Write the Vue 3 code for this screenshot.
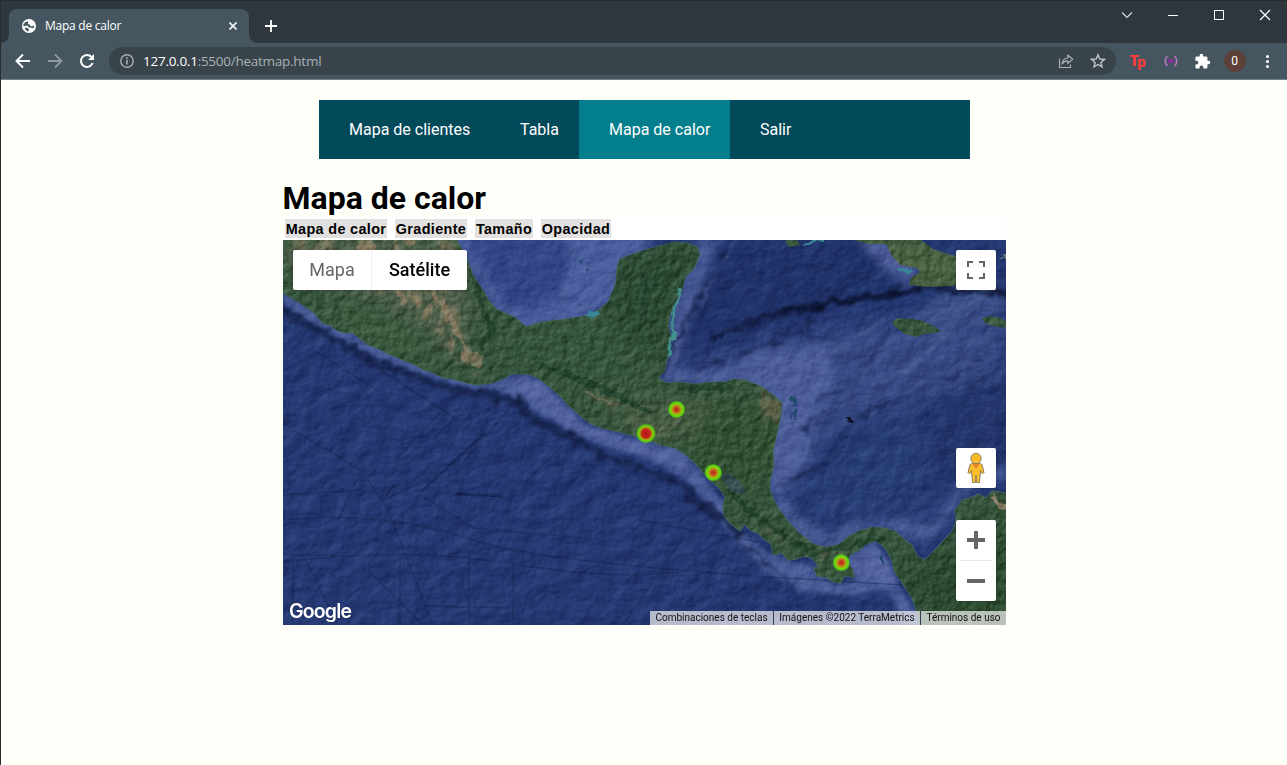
<script setup>
const navItems = [
  { label: 'Mapa de clientes', cls: 'w1' },
  { label: 'Tabla', cls: 'w2' },
  { label: 'Mapa de calor', cls: 'w3 active' },
  { label: 'Salir', cls: 'w4' },
]
const actions = [
  { label: 'Mapa de calor', cls: 'a1' },
  { label: 'Gradiente', cls: 'a2' },
  { label: 'Tamaño', cls: 'a3' },
  { label: 'Opacidad', cls: 'a4' },
]
const heat = [
  { x: 363, y: 193.5, r: 10.5, hot: true },
  { x: 393.5, y: 169.5, r: 9 },
  { x: 430.3, y: 232.6, r: 9 },
  { x: 558.3, y: 322.6, r: 9 },
]
const mainland =
  'M0 0H174L183 17L190 35L200 50L206 61L213 69L233 78L243 87L258 82L283 79L307 75L318 68L325 62L333 43L334 27L337 19L347 15L362 10L372 7L392 2L405 3L414 7L417 14L412 27L402 38L399 50L392 63L387 75L385 87L388 96L387 107L384 120L382 130L375 138L384 143L395 142L412 144L429 142L442 142L451 139L462 140L479 147L489 154L499 163L498 175L494 193L492 203L490 212L491 226L487 240L487 250L491 260L495 268L505 281L516 293L530 304L541 307L555 305L566 296L576 291L589 287L601 288L612 291L622 300L629 305L634 316L642 320L647 315L655 307L670 290L673 281L672 271L679 260L690 257L695 254L703 258L709 251L723 253V385H637L632 366L629 358L620 344L612 333L609 321L605 313L599 305L592 301L582 305L577 310L568 314L564 321L570 330L571 337L561 336L558 343L550 342L543 337L534 336L531 329L535 326L529 318L521 316L514 319L505 320L499 313L490 315L488 304L481 299L475 293L468 291L462 284L457 291L447 283L441 276L440 265L442 257L437 249L425 238L418 230L412 223L402 214L392 208L382 206L375 204L362 199L340 193L318 188L308 184L300 178L285 165L276 155L268 148L255 138L247 135L240 134L229 134L222 138L210 143L195 145L183 143L170 139L160 138L150 133L141 130L130 124L105 114L96 109L85 105L75 97L70 93L57 92L48 86L40 83L30 72L12 60L0 53Z'
const islands =
  'M571 0L585 4H603L609 16L618 25L634 28L637 32L628 38L626 45L645 47L669 46L688 42V18L668 15L650 9L638 0ZM609 81L615 78L630 79L640 81L652 87L658 91L651 93L640 94L633 97L622 94L618 91L611 86ZM699 79L705 76L715 77L723 81V88L710 86L702 83ZM502 1L505 0H514L517 5L506 7Z'
</script>

<template>
  <div class="window">
    <header class="chrome">
      <div class="tabstrip">
        <div class="tab">
          <svg class="globe" viewBox="0 0 16 16" width="14" height="14"><circle cx="8" cy="8" r="8" fill="#fff"/><path d="M1.6 6.2L3.6 3.6L6.6 2.6L7.3 4.4L6.2 6H8.6L9.8 8.2H12.2L14 7.2L13.8 9.8L11.6 10.6L10.2 9.6H8L6.2 7.8H4.2L1.7 8.4ZM3 9.6L6.2 10.4L8.2 12L6.8 14.2L4.4 12.8Z" fill="#455660"/></svg>
          <span class="tab-title">Mapa de calor</span>
          <svg class="tab-close" width="8" height="8" viewBox="0 0 8 8"><path d="M.5 .5L7.5 7.5M7.5 .5L.5 7.5" stroke="#f4f6f7" stroke-width="1.6"/></svg>
        </div>
        <svg class="plus" width="12" height="12" viewBox="0 0 12 12"><path d="M6 0V12M0 6H12" stroke="#fff" stroke-width="1.8"/></svg>
        <div class="win-buttons">
          <svg width="46" height="30" viewBox="0 0 46 30"><path d="M18 12.5L23 17.5L28 12.5" fill="none" stroke="#dde1e2" stroke-width="1.1"/></svg>
          <svg width="46" height="30" viewBox="0 0 46 30"><path d="M18 15.5H28" stroke="#fff"/></svg>
          <svg width="46" height="30" viewBox="0 0 46 30"><rect x="18.5" y="10.5" width="9" height="9" fill="none" stroke="#fff"/></svg>
          <svg width="46" height="30" viewBox="0 0 46 30"><path d="M18 10L28 20M28 10L18 20" stroke="#fff" stroke-width="1.2"/></svg>
        </div>
      </div>
      <div class="toolbar">
        <svg class="nav-icon" width="16" height="16" viewBox="0 0 16 16"><path d="M15 8H2.5M8 1.5L1.5 8L8 14.5" fill="none" stroke="#fff" stroke-width="1.9"/></svg>
        <svg class="nav-icon" width="16" height="16" viewBox="0 0 16 16"><path d="M1 8H13.5M8 1.5L14.5 8L8 14.5" fill="none" stroke="#91999e" stroke-width="1.8"/></svg>
        <svg class="nav-icon" width="16" height="16" viewBox="0 0 16 16"><path d="M13.6 10A6 6 0 1 1 12.5 4" fill="none" stroke="#fff" stroke-width="2"/><path d="M15 1V7H9Z" fill="#fff"/></svg>
        <div class="address">
          <svg width="14" height="14" viewBox="0 0 14 14"><circle cx="7" cy="7" r="6.2" fill="none" stroke="#a5acb0" stroke-width="1.4"/><path d="M7 6V10.6M7 3.3V4.9" stroke="#a5acb0" stroke-width="1.6"/></svg>
          <span class="url"><b>127.0.0.1</b>:5500/heatmap.html</span>
          <svg class="share" width="16" height="16" viewBox="0 0 16 16"><path d="M1.5 5.5V14.5H12.5V11.5" fill="none" stroke="#a9b0b4" stroke-width="1.2"/><path d="M4 11C4.600 7.200 6.500 5.200 9.800 5V2L14.700 6.300L9.800 10.500V7.900C7.400 7.900 5.500 8.800 4 11Z" fill="none" stroke="#a9b0b4" stroke-width="1.2" stroke-linejoin="round"/></svg>
          <svg class="star" width="16" height="16" viewBox="0 0 16 16"><path d="M8 1.800L9.800 6L14.400 6.400L10.900 9.400L12 13.900L8 11.500L4 13.900L5.100 9.400L1.600 6.400L6.200 6Z" fill="none" stroke="#c2c8cb" stroke-width="1.35"/></svg>
        </div>
        <div class="extensions">
          <span class="tp">T<i>p</i></span>
          <svg class="radio" width="14" height="12" viewBox="0 0 14 12"><path d="M3.300 1Q-.900 6 3.300 11M10.700 1Q14.900 6 10.700 11" fill="none" stroke="#b87ac4" stroke-width="1.5"/><path d="M5.300 3.500Q3.700 6 5.300 8.500M8.700 3.500Q10.300 6 8.700 8.500" fill="none" stroke="#8d2799" stroke-width="1.3"/><circle cx="7" cy="6" r="1.4" fill="#a421b3"/></svg>
          <svg class="puzzle" width="17" height="17" viewBox="0 0 24 24"><path fill="#fff" d="M20.500 11H19V7a2 2 0 0 0-2-2h-4V3.500a2.500 2.500 0 0 0-5 0V5H4a2 2 0 0 0-2 2v3.800h1.500a2.700 2.700 0 0 1 0 5.400H2V20c0 1.100.9 2 2 2h3.800v-1.500a2.700 2.700 0 0 1 5.400 0V22H17a2 2 0 0 0 2-2v-4h1.500a2.500 2.500 0 0 0 0-5Z"/></svg>
          <span class="avatar">0</span>
          <span class="kebab"><i/><i/><i/></span>
        </div>
      </div>
    </header>

    <main class="page">
      <nav class="menu">
        <a v-for="item in navItems" :key="item.label" :class="item.cls">{{ item.label }}</a>
      </nav>
      <section class="content">
        <h1>Mapa de calor</h1>
        <div class="actions">
          <button v-for="action in actions" :key="action.label" :class="action.cls">{{ action.label }}</button>
        </div>
        <div class="map">
          <svg class="terrain" width="723" height="385" viewBox="0 0 723 385">
            <defs>
              <radialGradient id="heat"><stop offset="0" stop-color="#b91f24"/><stop offset=".25" stop-color="#c44a1b"/><stop offset=".5" stop-color="#b3a317"/><stop offset=".67" stop-color="#6fda0b"/><stop offset=".85" stop-color="#5bd60b" stop-opacity=".85"/><stop offset="1" stop-color="#4fae20" stop-opacity="0"/></radialGradient>
              <radialGradient id="hot"><stop offset="0" stop-color="#b8161c"/><stop offset=".4" stop-color="#c32318"/><stop offset=".6" stop-color="#a8a413"/><stop offset=".75" stop-color="#60d80a"/><stop offset="1" stop-color="#4fae20" stop-opacity="0"/></radialGradient>
              <filter id="b1" x="-10%" y="-10%" width="120%" height="120%"><feGaussianBlur stdDeviation=".7"/></filter>
              <filter id="b2" x="-30%" y="-30%" width="160%" height="160%"><feGaussianBlur stdDeviation="2"/></filter>
              <filter id="b5" x="-30%" y="-30%" width="160%" height="160%"><feGaussianBlur stdDeviation="5"/></filter>
              <filter id="b10" x="-40%" y="-40%" width="180%" height="180%"><feGaussianBlur stdDeviation="10"/></filter>
              <filter id="seaRelief" x="0" y="0" width="100%" height="100%" color-interpolation-filters="sRGB">
                <feTurbulence type="fractalNoise" baseFrequency=".05 .06" numOctaves="4" seed="12" result="n"/>
                <feColorMatrix in="n" values="0 0 0 0 0  0 0 0 0 0  0 0 0 0 0  1 0 0 0 0"/>
                <feDiffuseLighting surfaceScale="2.2" diffuseConstant="1" lighting-color="#fff"><feDistantLight azimuth="225" elevation="45"/></feDiffuseLighting>
                <feColorMatrix values="1 0 0 0 -.26  0 1 0 0 -.26  0 0 1 0 -.26  0 0 0 1 0"/>
              </filter>
              <filter id="landRelief" x="0" y="0" width="100%" height="100%" color-interpolation-filters="sRGB">
                <feTurbulence type="fractalNoise" baseFrequency=".11" numOctaves="4" seed="8" result="n"/>
                <feColorMatrix in="n" values="0 0 0 0 0  0 0 0 0 0  0 0 0 0 0  1 0 0 0 0"/>
                <feDiffuseLighting surfaceScale="1.5" diffuseConstant="1" lighting-color="#fff"><feDistantLight azimuth="225" elevation="45"/></feDiffuseLighting>
                <feColorMatrix values="1 0 0 0 -.2  0 1 0 0 -.2  0 0 1 0 -.2  0 0 0 1 0"/>
              </filter>
              <filter id="rough" x="-20%" y="-20%" width="140%" height="140%" color-interpolation-filters="sRGB">
                <feTurbulence type="fractalNoise" baseFrequency=".1" numOctaves="3" seed="5" result="n"/><feDisplacementMap in="SourceGraphic" in2="n" scale="10" xChannelSelector="R" yChannelSelector="G"/>
              </filter>
              <filter id="ridge" x="-20%" y="-20%" width="140%" height="140%" color-interpolation-filters="sRGB">
                <feTurbulence type="fractalNoise" baseFrequency=".09" numOctaves="4" seed="5" result="n"/><feDisplacementMap in="SourceGraphic" in2="n" scale="14" xChannelSelector="R" yChannelSelector="G"/><feGaussianBlur stdDeviation="1.5"/>
              </filter>
              <filter id="dry" x="-20%" y="-20%" width="140%" height="140%" color-interpolation-filters="sRGB">
                <feTurbulence type="fractalNoise" baseFrequency=".09 .06" numOctaves="4" seed="23"/>
                <feColorMatrix values="0 0 0 0 .53  0 0 0 0 .48  0 0 0 0 .38  0 5 0 0 -2.2" result="spots"/>
                <feGaussianBlur in="SourceAlpha" stdDeviation="5" result="mask"/>
                <feComposite in="spots" in2="mask" operator="in"/>
              </filter>
              <clipPath id="land"><path :d="mainland"/><path :d="islands"/></clipPath>
            </defs>

            <!-- sea floor -->
            <rect width="723" height="385" fill="#273b76"/>
            <g filter="url(#b10)">
              <path d="M390 60L460 5L590 -10L640 45L520 75L420 110L385 125Z" fill="#24346d"/>
              <path d="M400 125L520 95L620 80L723 80V170L640 230L560 250L500 260L480 180Z" fill="#3b4e88"/>
              <path d="M540 190L723 130V240L650 280L560 290L500 260Z" fill="#2c3f79"/>
              <path d="M640 170L723 140V220L650 250Z" fill="#263870"/>
            </g>
            <g filter="url(#b5)" fill="#4f609c">
              <path d="M165 -8H365V20L330 70L300 88L240 98L215 78Z" fill="#4d609f"/>
              <path d="M180 -8H285L285 25L278 55L245 74L218 62Z" fill="#364a8b"/>
              <path d="M415 0H435L405 80L392 130L440 133L475 110L545 105L552 140L535 170L522 230L490 255L480 220L488 165L465 145L378 142L390 70Z"/>
              <path d="M575 0H610L638 25L625 48L588 15Z"/>
              <path d="M652 55L723 45V70L640 105L620 85Z" fill="#40538c"/>
              <path d="M490 265L520 305L550 310L590 285L630 300L650 300L680 255L705 235L723 240V225L680 242L650 285L617 280L575 280L545 295L515 275L495 250Z" fill="#4b5d98"/>
            </g>
            <g filter="url(#b2)">
              <path d="M0 53L30 70L60 90L110 112L150 132L200 145L230 136L258 143L300 185L350 198L398 208L442 265L455 292L490 315L530 328L550 345L575 340L560 318L590 303L612 340L640 385L625 385L603 350L565 355L515 350L482 330L455 303L430 272L405 241L370 221L314 204L265 178L217 151L180 147L120 129L80 112L44 92L0 64Z" fill="#4c5e9a"/>
              <path d="M567 322L592 303L607 323L616 346L570 333Z" fill="#5666a3"/>
              <path d="M222 140L240 135L258 140L302 184L340 197L372 208L400 222L412 238L385 222L330 206L285 190L250 165Z" fill="#5565a3"/>
            </g>
            <g filter="url(#ridge)" fill="none" stroke-linecap="round">
              <path d="M-5 69Q15 79 33 88T67 108T100 125T150 143T183 152T217 157T240 167T277 192T317 213T360 229T405 250T429 271T452 295" stroke="#17244f" stroke-width="8" opacity=".85"/>
              <path d="M380 132L392 105L412 65L445 10" stroke="#18234f" stroke-width="4" opacity=".8"/>
              <path d="M430 98L495 72L565 59L645 47L723 53" stroke="#131d42" stroke-width="6" opacity=".85"/>
              <path d="M530 64L580 60L640 48M500 74L540 66" stroke="#0a112d" stroke-width="6" opacity=".75"/>
              <path d="M487 80L500 76M487 94L540 96M497 88L537 84M507 94V78M525 92V76M415 128L460 112L498 103" stroke="#1a2755" stroke-width="3" opacity=".8"/>
              <path d="M498 247L537 225L559 193L575 177L642 148L700 120M525 236L565 207M660 160L720 130M455 300L510 345L520 385M420 385L482 342M600 110L560 150L530 160M520 190L545 170" stroke="#1c2c5b" stroke-width="3" opacity=".7"/>
              <path d="M417 68L436 25L458 -5M390 118L405 82M600 78L570 100L548 110M670 91L625 130L582 150" stroke="#6373a9" stroke-width="2" opacity=".5"/>
            </g>
            <g fill="none" stroke="#182750" opacity=".42" filter="url(#b1)">
              <path d="M0 280Q100 270 190 300T723 350M0 322Q120 306 230 324T410 330M205 192L165 230L100 260M280 205L240 245M138 255L190 288L300 298M20 315L45 365M85 330L140 385M117 310V385M186 310V385M0 255L80 250M55 280L78 230L10 190M85 240L104 268L150 385M230 325V385M355 280L520 310M400 298L340 385M30 110L95 151M90 125L175 180M165 165L112 220M185 168L150 198M225 170L178 225M0 315H50M10 320V385M140 366L230 368" stroke-width="1.5"/>
              <path d="M202 193L170 222L138 252M103 255L112 245M172 254L220 256" stroke-width="2.5" stroke="#081337"/>
            </g>
            <rect class="relief sea" width="723" height="385" filter="url(#seaRelief)"/>

            <!-- land masses -->
            <path :d="mainland" fill="none" stroke="#456b73" stroke-width="1.2"/>
            <g clip-path="url(#land)">
              <rect width="723" height="385" fill="#36533b"/>
              <g filter="url(#b10)">
                <path d="M330 20L410 0L408 40L390 65L380 130L350 100L325 110Z" fill="#294830"/>
                <path d="M220 95L325 75L365 130L330 165L275 130L225 120Z" fill="#34543a"/>
                <path d="M415 155L495 165L490 240L445 250L400 205Z" fill="#315032"/>
                <path d="M610 335L723 280V385H650Z" fill="#29482e"/>
                <path d="M0 0H170L190 75L170 110L110 65L0 30Z" fill="#50614b"/>
                <path d="M25 55L110 80L165 130L80 95Z" fill="#3c5c3e"/>
                <path d="M335 155L440 160L405 200L350 190Z" fill="#435a40"/>
                <path d="M560 0H700V48H610Z" fill="#48613f"/>
              </g>
              <path d="M35 0H140L165 45L180 100L200 135L175 125L152 83L115 65L80 30Z" filter="url(#dry)"/>
              <path d="M0 0H170V40L100 50L50 35Z" filter="url(#dry)" opacity=".8"/>
              <path d="M290 135L360 170L420 190L395 200L330 180ZM455 140L505 160L490 190ZM450 270L520 320L570 330V300L530 310Z" filter="url(#dry)" opacity=".3"/>
              <g filter="url(#rough)"><path d="M161 68L171 75L179 100L188 113L200 116L197 130L189 127L180 108L170 92Z" fill="#857b63" opacity=".75"/><path d="M302 150L328 164L337 165" fill="none" stroke="#7e765d" stroke-width="3" opacity=".6"/><path d="M478 153L498 165L494 181L480 171" fill="#62634a" opacity=".8"/><path d="M445 250L478 280L530 313L600 299M190 30L197 62L210 90L197 110M255 125L286 135L322 150L370 174M395 148H450" fill="none" stroke="#1c3c27" stroke-width="6" opacity=".65"/><path d="M708 255L723 270" stroke="#8a8067" stroke-width="4"/></g>
              <path d="M438 235Q448 228 463 251L457 255Q444 252 438 235Z" fill="#344b50" filter="url(#b1)"/>
              <rect class="relief ground" width="723" height="385" filter="url(#landRelief)"/>
            </g>
            <g filter="url(#rough)" fill="none"><path d="M397 48L391 70L389 96L387 116" stroke="#42958f" stroke-width="3" opacity=".9"/><path d="M520 3L540 1M615 27L624 34L629 29M307 76L316 71" stroke="#368896" stroke-width="4"/><path d="M509 158L512 166M507 177L514 172L513 180M598 315L599 325M297 20L298 23M304 30L305 33M297 64V67" stroke="#21496b" stroke-width="3"/><path d="M561 180L570 177L568 181Z" fill="#0d1324"/><path d="M718 17L723 15V21Z" fill="#638171"/></g>
            <circle v-for="p in heat" :key="p.x" :cx="p.x" :cy="p.y" :r="p.r" :fill="p.hot ? 'url(#hot)' : 'url(#heat)'"/>
          </svg>
          <div class="map-type"><span>Mapa</span><span class="selected">Satélite</span></div>
          <div class="control fullscreen"><svg width="18" height="18" viewBox="0 0 18 18"><path d="M1 6V1H6M12 1H17V6M17 12V17H12M6 17H1V12" fill="none" stroke="#666" stroke-width="2"/></svg></div>
          <div class="control pegman"><svg width="18" height="32" viewBox="0 0 18 32"><path d="M5 11.500L3 12.500L1 20.500L2.500 22L4.500 18.500L5.500 30.500H8.500L9 23.500L9.500 30.500H12.500L13.500 18.500L15.500 22L17 20.500L15 12.500L13 11.500Z" fill="#fbbc2c" stroke="#8c8065"/><path d="M5 11.500H13L9 17Z" fill="#e68b2e"/><circle cx="9" cy="6.500" r="5.200" fill="#fbbc2c" stroke="#8c8065"/></svg></div>
          <div class="zoom"><svg width="40" height="81" viewBox="0 0 40 81"><path d="M20 11V29M11 20H29M11 61H29" stroke="#666" stroke-width="4"/><path d="M5 40.500H35" stroke="#e6e6e6"/></svg></div>
          <div class="google">Google</div>
          <div class="credits"><span class="c1">Combinaciones de teclas</span><span class="c2">Imágenes ©2022 TerraMetrics</span><span class="c3">Términos de uso</span></div>
        </div>
      </section>
    </main>
  </div>
</template>

<style>
body { background: #fffffa; overflow: hidden; }
</style>
<style scoped>
* { box-sizing: border-box; }
svg { display: block; flex: none; }
.window { width: 1287px; height: 765px; background: #fffffa; border-left: 1px solid #292d2e; overflow: hidden; font-family: Roboto, sans-serif; }
.chrome { width: 1287px; height: 80px; margin-left: -1px; }
.tabstrip { height: 43px; background: #2d373d; border-top: 1px solid #2a2b30; padding-left: 9px; display: flex; }
.tab { width: 240px; height: 34px; margin-top: 8px; border-radius: 8px 8px 0 0; background: #455660; display: flex; align-items: center; padding: 0 12px 0 13px; position: relative; }
.tab::before, .tab::after { content: ''; position: absolute; bottom: 0; width: 8px; height: 8px; }
.tab::before { left: -8px; background: radial-gradient(circle at 0 0, transparent 7.5px, #455660 8px); }
.tab::after { right: -8px; background: radial-gradient(circle at 100% 0, transparent 7.5px, #455660 8px); }
.tab-title { font: 12px 'Open Sans', sans-serif; letter-spacing: -.25px; color: #fff; margin: -1px 0 0 9px; width: 100px; }
.tab-close { margin-left: auto; }
.plus { margin: 19px 0 0 16px; }
.win-buttons { display: flex; margin: -1px -1px 0 auto; }
.toolbar { height: 37px; background: #455660; border-bottom: 1px solid #73828a; display: flex; align-items: center; padding-left: 15px; }
.nav-icon { margin-right: 16px; }
.nav-icon:nth-child(3) { margin-right: 14px; }
.address { width: 1007px; height: 28px; border-radius: 14px; background: #38434a; display: flex; align-items: center; padding: 0 10px 0 11px; }
.url { font: 13.5px 'Open Sans', sans-serif; letter-spacing: -.26px; color: #aab2b6; margin: -1px 0 0 9px; white-space: nowrap; }
.url b { color: #fff; font-weight: 400; }
.share { margin-left: auto; }
.star { margin-left: 16px; }
.extensions { display: flex; align-items: center; flex: 1; }
.tp { color: #fb3d3c; font: 900 15px/20px Roboto, sans-serif; width: 18px; margin-left: 13.5px; letter-spacing: -1px; }
.tp i { font-style: normal; position: relative; top: 1px; }
.extensions > svg { margin-left: 16px; }
.avatar { width: 22px; height: 22px; border-radius: 50%; background: #5d4037; color: #fff; font: 12px/22px Roboto, sans-serif; text-align: center; margin-left: 13px; }
.kebab { display: grid; gap: 2px; margin-left: 20px; }
.kebab i { width: 3px; height: 3px; border-radius: 50%; background: #fff; }
.menu { width: 651px; height: 59px; margin: 20px 0 0 318px; background: #024959; display: flex; color: #fff; font-size: 16px; line-height: 19px; white-space: nowrap; }
.menu a { padding: 20px 20px 20px 30px; }
.w1 { width: 171px; } .w2 { width: 89px; } .w3 { width: 151px; } .w4 { width: 90px; }
.menu .active { background: #037e8c; }
.content { width: 723px; margin: 20px 0 0 282px; }
h1 { margin: 0; height: 38px; font-size: 32px; line-height: 38px; font-weight: 700; color: #000; text-indent: -.5px; }
.actions { background: #fff; height: 23px; padding: 2px; display: flex; gap: 8px; }
.actions button { height: 19px; border: 0; padding: 1px 0 0; background: #e3e1df; color: #000; font: bold 14.4px/18px 'Liberation Sans', Arial, sans-serif; letter-spacing: .35px; white-space: nowrap; }
.a1 { width: 102px; } .a2 { width: 72px; } .a3 { width: 58px; } .a4 { width: 70px; }
.map { height: 385px; position: relative; overflow: hidden; }
.relief { mix-blend-mode: soft-light; }
.sea { opacity: .6; }
.ground { opacity: .85; }
.map-type, .control, .zoom { position: absolute; background: #fff; border-radius: 2px; box-shadow: 0 1px 4px -1px rgba(0,0,0,.3); }
.map-type { left: 10px; top: 10px; width: 174px; height: 40px; display: flex; font-size: 18px; line-height: 40px; color: #666; }
.map-type span { width: 78px; text-align: center; }
.map-type .selected { width: 96px; color: #000; font-weight: 500; border-left: 1px solid #eee; }
.control { right: 10px; width: 40px; height: 40px; display: flex; align-items: center; justify-content: center; }
.fullscreen { top: 10px; } .pegman { top: 208px; }
.zoom { right: 10px; top: 280px; width: 40px; height: 81px; }
.google { position: absolute; left: 6px; top: 359px; color: #fff; font: 600 19.5px/25px Inter, sans-serif; letter-spacing: -.85px; text-shadow: 0 0 1px rgba(0,0,0,.4); }
.credits { position: absolute; right: 0; bottom: 0; height: 14px; display: flex; font-size: 10px; line-height: 14px; color: #111; white-space: nowrap; text-align: center; }
.credits span { background: rgba(245,245,245,.7); border-left: 1px solid #303e52; }
.c1 { width: 123px; } .c2 { width: 147px; } .c3 { width: 86px; }
.credits .c1 { border: 0; }
</style>
